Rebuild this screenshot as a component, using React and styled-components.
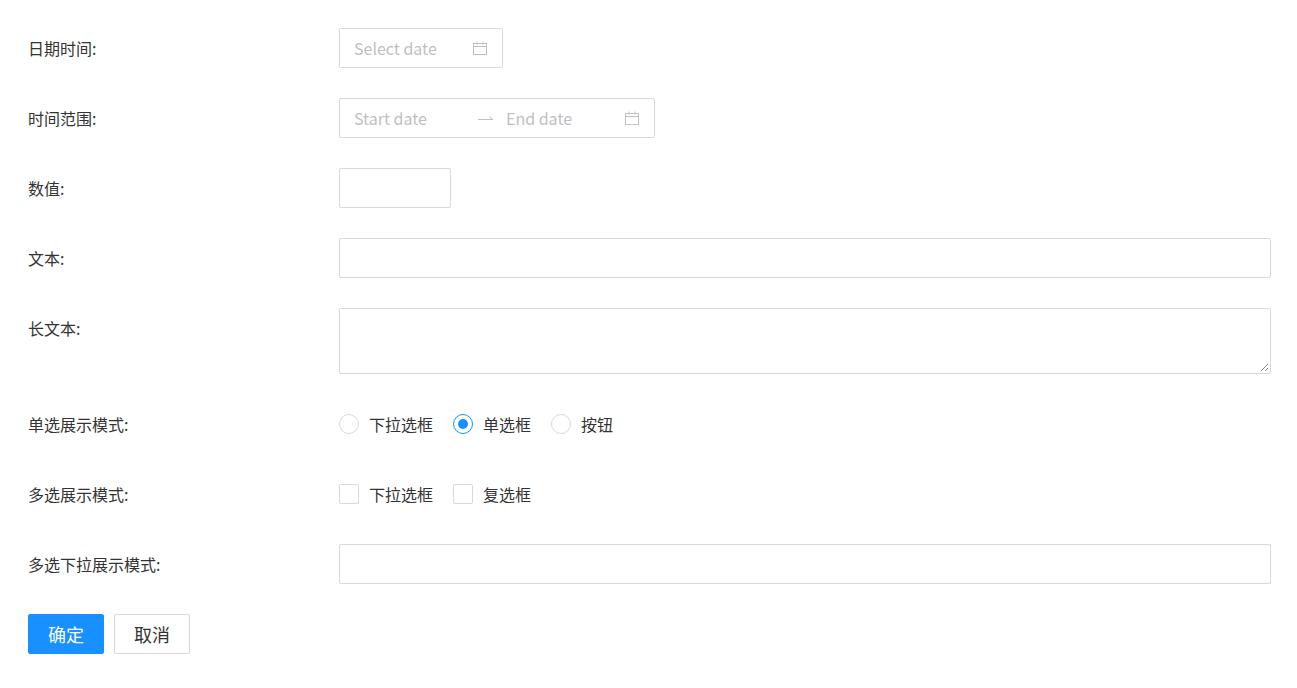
import React from "react";
import styled, { createGlobalStyle } from "styled-components";

const Global = createGlobalStyle`
  body {
    margin: 0;
    background: #fff;
    font-family: "Noto Sans CJK SC", "Noto Sans", sans-serif;
    color: #333;
    font-size: 16px;
  }
`;

const Form = styled.div`
  padding: 28px 26px 0 28px;
  display: flex;
  flex-direction: column;
  gap: 30px;
`;

const Row = styled.div`
  display: flex;
  align-items: flex-start;
`;

const Label = styled.div`
  width: 311px;
  flex-shrink: 0;
  line-height: 40px;
  height: 40px;
  font-size: 16px;
  color: #333;
`;

const Control = styled.div`
  flex: 1;
  display: flex;
  align-items: center;
  min-height: 40px;
`;

const Box = styled.div`
  box-sizing: border-box;
  height: ${(p) => p.$h || 40}px;
  width: ${(p) => (p.$w ? `${p.$w}px` : "100%")};
  border: 1px solid #d9d9d9;
  border-radius: 2px;
  display: flex;
  align-items: center;
  padding: 0 14px;
  color: #bfbfbf;
  font-size: 16px;
  position: relative;
`;

const Placeholder = styled.span`
  flex: ${(p) => (p.$grow ? 1 : "none")};
  width: ${(p) => (p.$w ? `${p.$w}px` : "auto")};
`;

const Resize = styled.svg`
  position: absolute;
  right: 2px;
  bottom: 2px;
`;

const Option = styled.label`
  display: flex;
  align-items: center;
  gap: 10px;
  margin-right: 20px;
  color: #333;
`;

const Radio = styled.span`
  box-sizing: border-box;
  width: 20px;
  height: 20px;
  border-radius: 50%;
  border: 1px solid ${(p) => (p.$on ? "#1890ff" : "#d9d9d9")};
  display: flex;
  align-items: center;
  justify-content: center;
  &::after {
    content: "";
    width: 10px;
    height: 10px;
    border-radius: 50%;
    background: ${(p) => (p.$on ? "#1890ff" : "transparent")};
  }
`;

const Check = styled.span`
  box-sizing: border-box;
  width: 20px;
  height: 20px;
  border-radius: 2px;
  border: 1px solid #d9d9d9;
`;

const Buttons = styled.div`
  display: flex;
  gap: 10px;
`;

const Button = styled.button`
  height: 40px;
  padding: 0 19px;
  border-radius: 2px;
  font-family: inherit;
  font-size: 18px;
  border: 1px solid ${(p) => (p.$primary ? "#1890ff" : "#d9d9d9")};
  background: ${(p) => (p.$primary ? "#1890ff" : "#fff")};
  color: ${(p) => (p.$primary ? "#fff" : "#333")};
`;

const Calendar = () => (
  <svg width="16" height="16" viewBox="0 0 16 16" fill="none" stroke="#bfbfbf" strokeWidth="1">
    <rect x="1.5" y="3.5" width="13" height="11" />
    <line x1="1.5" y1="6.5" x2="14.5" y2="6.5" />
    <line x1="5" y1="1.5" x2="5" y2="4.5" />
    <line x1="11" y1="1.5" x2="11" y2="4.5" />
  </svg>
);

const Arrow = () => (
  <svg width="16" height="10" viewBox="0 0 16 10" fill="none" stroke="#bfbfbf">
    <path d="M0 6.5h15l-4-3" />
  </svg>
);

export default function App() {
  return (
    <>
      <Global />
      <Form>
        <Row>
          <Label>日期时间:</Label>
          <Control>
            <Box $w={164}>
              <Placeholder $grow>Select date</Placeholder>
              <Calendar />
            </Box>
          </Control>
        </Row>
        <Row>
          <Label>时间范围:</Label>
          <Control>
            <Box $w={316}>
              <Placeholder $w={124}>Start date</Placeholder>
              <Arrow />
              <Placeholder $grow style={{ marginLeft: 12 }}>End date</Placeholder>
              <Calendar />
            </Box>
          </Control>
        </Row>
        <Row>
          <Label>数值:</Label>
          <Control>
            <Box $w={112} />
          </Control>
        </Row>
        <Row>
          <Label>文本:</Label>
          <Control>
            <Box />
          </Control>
        </Row>
        <Row>
          <Label>长文本:</Label>
          <Control>
            <Box $h={66}>
              <Resize width="8" height="8" viewBox="0 0 8 8" stroke="#888">
                <path d="M1 8L8 1M5 8L8 5" />
              </Resize>
            </Box>
          </Control>
        </Row>
        <Row>
          <Label>单选展示模式:</Label>
          <Control>
            <Option><Radio />下拉选框</Option>
            <Option><Radio $on />单选框</Option>
            <Option><Radio />按钮</Option>
          </Control>
        </Row>
        <Row>
          <Label>多选展示模式:</Label>
          <Control>
            <Option><Check />下拉选框</Option>
            <Option><Check />复选框</Option>
          </Control>
        </Row>
        <Row>
          <Label>多选下拉展示模式:</Label>
          <Control>
            <Box />
          </Control>
        </Row>
        <Buttons>
          <Button $primary>确定</Button>
          <Button>取消</Button>
        </Buttons>
      </Form>
    </>
  );
}
